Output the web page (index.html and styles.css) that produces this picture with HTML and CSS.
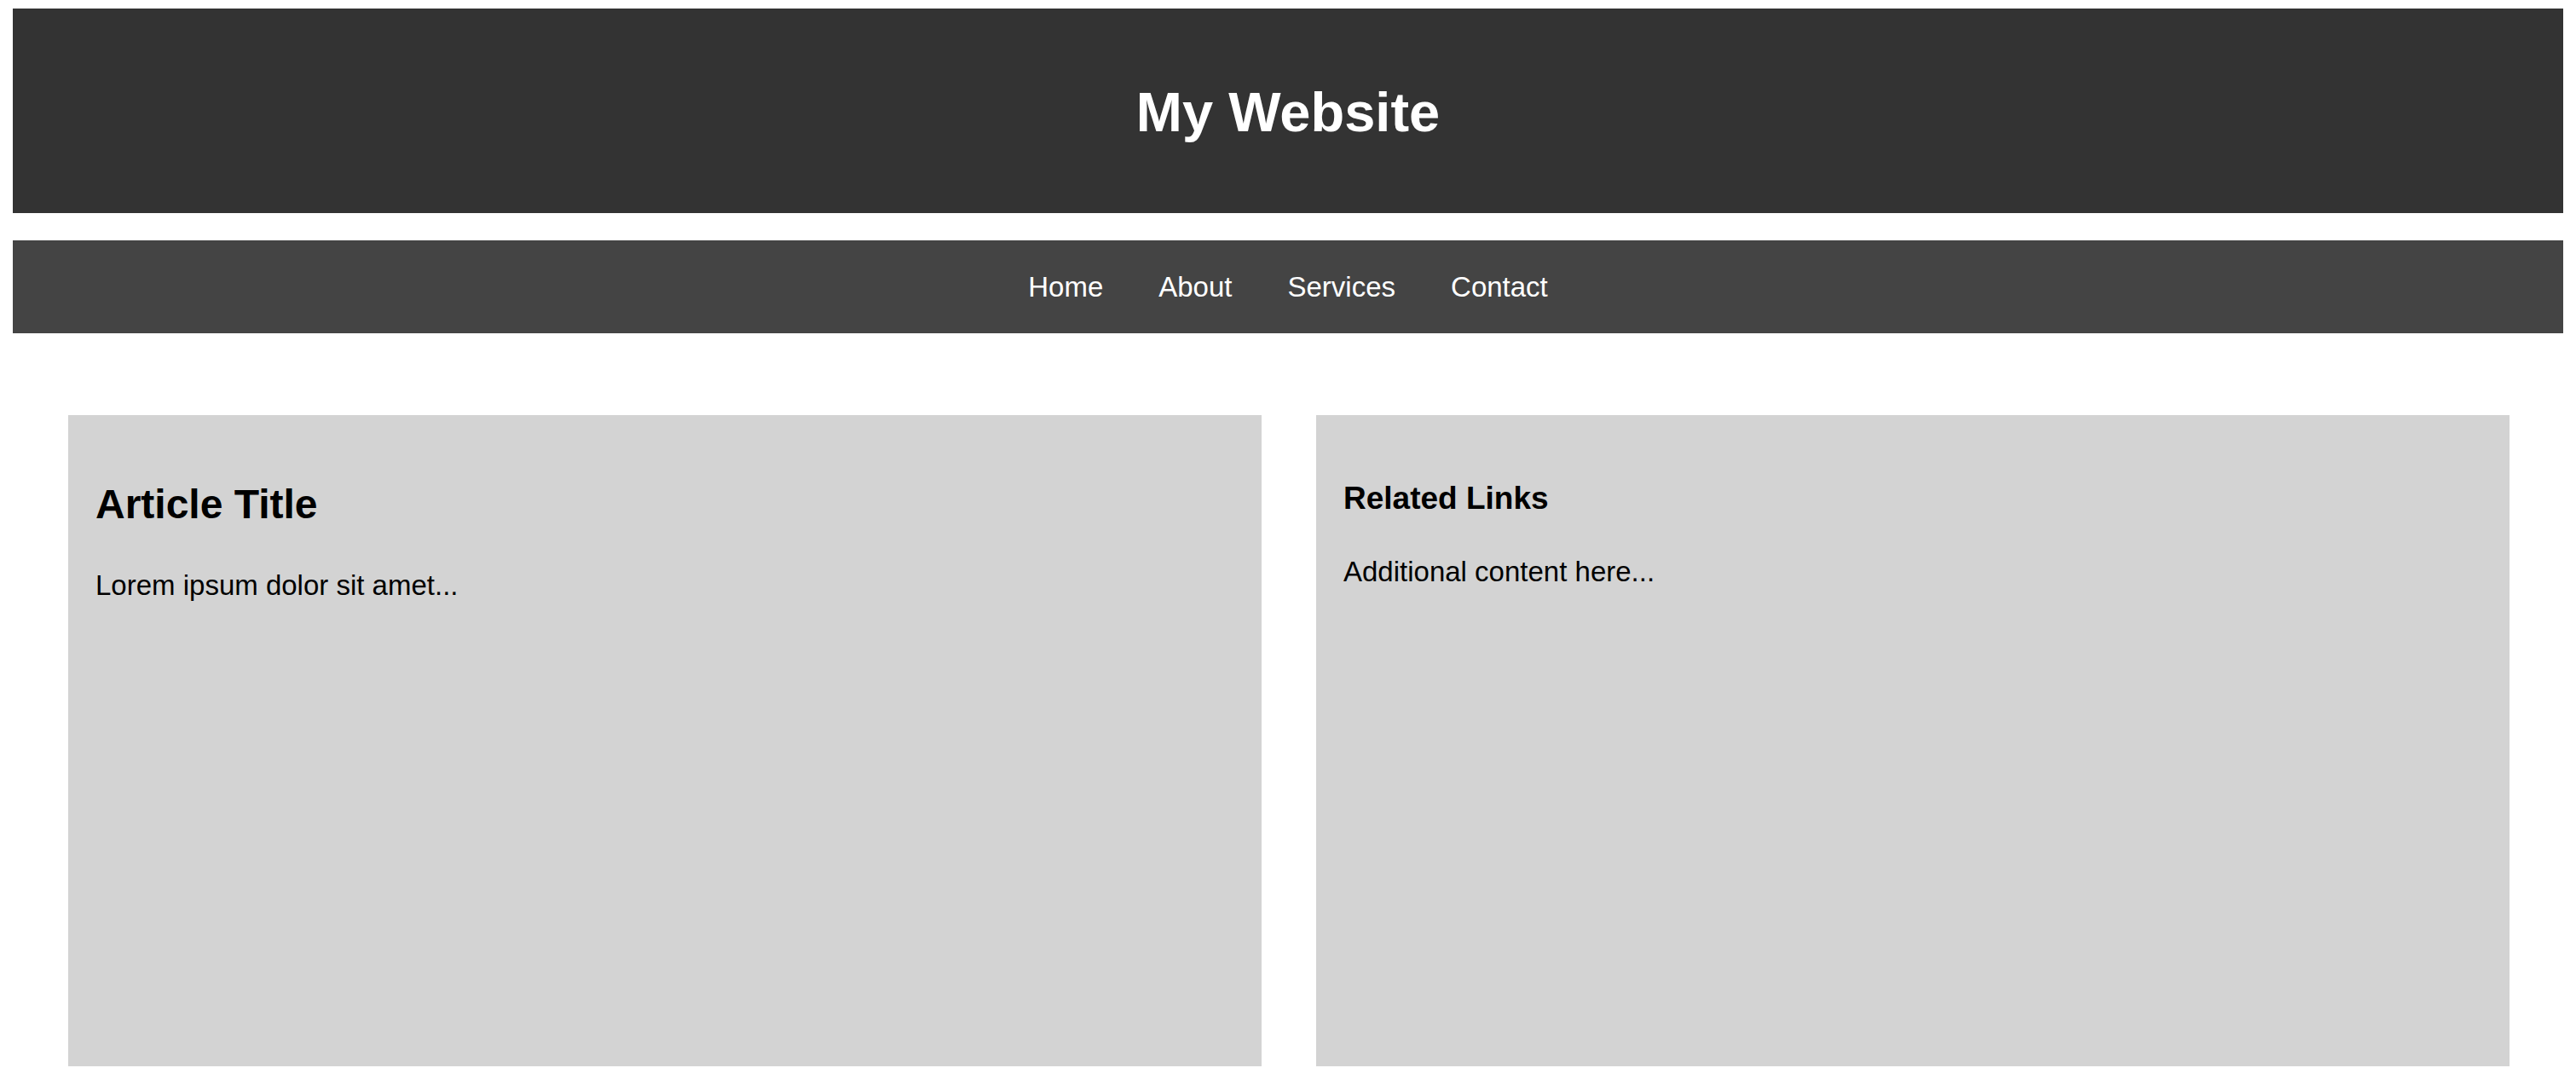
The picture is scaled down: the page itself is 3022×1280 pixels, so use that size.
FILE: index.html
```html
<!DOCTYPE html>
<html lang="en">
<head>
<meta charset="utf-8">
<title>My Website</title>
<link rel="stylesheet" href="styles.css">
</head>
<body>
  <header class="site-header">
    <h1 class="site-title">My Website</h1>
  </header>
  <nav class="site-nav">
    <a class="nav-link" href="#">Home</a>
    <a class="nav-link" href="#">About</a>
    <a class="nav-link" href="#">Services</a>
    <a class="nav-link" href="#">Contact</a>
  </nav>
  <main class="content">
    <article class="card">
      <h2 class="card-title">Article Title</h2>
      <p class="card-text">Lorem ipsum dolor sit amet...</p>
    </article>
    <aside class="card">
      <h3 class="side-title">Related Links</h3>
      <p class="card-text">Additional content here...</p>
    </aside>
  </main>
</body>
</html>
```

FILE: styles.css
```css
* {
  box-sizing: border-box;
}

body {
  margin: 10px 15px 0 15px;
  font-family: "Liberation Sans", Arial, sans-serif;
  background: #ffffff;
  color: #000000;
}

.site-header {
  background: #333333;
  padding: 84px 0 81px;
  text-align: center;
}

.site-title {
  margin: 0;
  color: #ffffff;
  font-size: 65px;
  line-height: 75px;
  font-weight: bold;
}

.site-nav {
  margin-top: 32px;
  background: #444444;
  padding: 36px 0 35px;
  display: flex;
  justify-content: center;
  gap: 65px;
}

.nav-link {
  color: #ffffff;
  text-decoration: none;
  font-size: 33px;
  line-height: 38px;
}

.content {
  display: grid;
  grid-template-columns: 1fr 1fr;
  gap: 64px;
  padding: 96px 63px 0 65px;
}

.card {
  background: #d3d3d3;
  padding: 32px;
  height: 764px;
}

.card-title {
  margin: 45px 0 48px;
  font-size: 48px;
  line-height: 56px;
  font-weight: bold;
}

.side-title {
  margin: 44px 0 46px;
  font-size: 37px;
  line-height: 43px;
  font-weight: bold;
}

.card-text {
  margin: 0;
  font-size: 33px;
  line-height: 38px;
}
```
